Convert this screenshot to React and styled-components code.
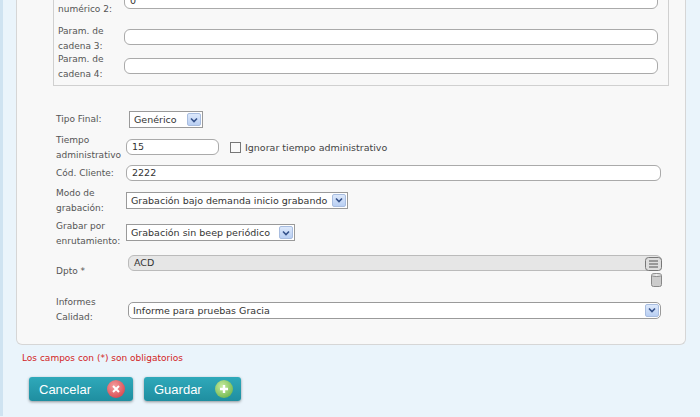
import React from "react";
import styled, { createGlobalStyle } from "styled-components";

const G = createGlobalStyle`
  html,body{margin:0;padding:0;background:#eaf4fb;font-family:"DejaVu Sans",Verdana,sans-serif;font-size:9px;color:#444;overflow:hidden;}
`;
const Page = styled.div`width:700px;height:417px;position:relative;border-left:3px solid #cfe3f1;box-sizing:border-box;`;
const Panel = styled.div`
  margin-left:13px;width:670px;height:346px;box-sizing:border-box;background:#f8f8f8;
  border:1px solid #d6d6d6;border-top:none;border-radius:0 0 6px 6px;position:relative;
`;
const Fieldset = styled.div`
  margin-left:36px;width:616px;height:87px;margin-top:-1px;box-sizing:border-box;
  border:1px solid #d0d0d0;border-top:none;display:flex;flex-direction:column;
`;
const Body = styled.div`padding-left:35px;padding-top:20px;`;
const Row = styled.div`
  display:flex;align-items:${p=>p.$al||"center"};height:${p=>p.$h}px;
  padding-left:${p=>p.$pl||4}px;box-sizing:border-box;white-space:nowrap;
`;
const Label = styled.div`width:${p=>p.$w||66}px;line-height:15px;color:#555;flex:none;${p=>p.$pt?`padding-top:${p.$pt}px;`:""}`;
const Input = styled.div`
  width:${p=>p.$w}px;height:16px;box-sizing:border-box;border:1px solid #aaa;border-radius:6px;
  background:${p=>p.$grey?"#e6e6e6":"#fff"};padding:0 5px;line-height:14px;font-size:9.5px;color:#333;
  margin-left:${p=>p.$ml||0}px;flex:none;position:relative;${p=>p.$grey?"border-color:#bbb;":""}
`;
const Select = styled.div`
  width:${p=>p.$w}px;height:17px;box-sizing:border-box;border:1px solid #9a9a9a;background:#fff;
  display:flex;align-items:center;justify-content:space-between;padding-left:4px;font-size:9.5px;color:#333;
  margin-left:${p=>p.$ml||0}px;flex:none;border-radius:${p=>p.$r||0}px;white-space:nowrap;overflow:hidden;
`;
const Arrow = styled.div`
  width:14px;height:13px;margin-right:1px;background:linear-gradient(#dce8fb,#b9cff3);border:1px solid #a8bde0;
  border-radius:2px;box-sizing:border-box;display:flex;align-items:center;justify-content:center;flex:none;
`;
const Check = styled.div`width:11px;height:11px;border:1px solid #777;background:#fafafa;margin-left:11px;margin-right:4px;box-sizing:border-box;`;
const Req = styled.div`color:#d21d1d;font-size:9px;margin:8px 0 0 19px;`;
const Buttons = styled.div`display:flex;gap:11px;margin:14px 0 0 26px;`;
const Btn = styled.div`
  width:${p=>p.$w}px;height:24px;background:linear-gradient(#2fa9ba,#1f8ea0);border-radius:3px;
  box-shadow:0 1px 3px rgba(0,0,0,.4);color:#fff;font-family:"Liberation Sans",Arial,sans-serif;font-size:13px;
  display:flex;align-items:center;justify-content:space-between;padding:0 8px 0 10px;box-sizing:border-box;
`;
const Circ = styled.div`
  width:18px;height:18px;border-radius:50%;background:radial-gradient(circle at 40% 35%,${p=>p.$c1},${p=>p.$c2});
  display:flex;align-items:center;justify-content:center;
`;
const Tools = styled.div`position:absolute;right:0;top:1px;display:flex;flex-direction:column;align-items:flex-end;gap:2px;margin-right:-1px;`;

const Chev = () => (<svg width="8" height="6" viewBox="0 0 8 6"><path d="M1 1.5l3 3 3-3" stroke="#34518a" strokeWidth="1.6" fill="none"/></svg>);

export default function App(){
  return (<Page><G/>
    <Panel>
      <Fieldset>
        <Row $h={26} $al="flex-start"><Label $pt={3}>numérico 2:</Label><Input $w={534} style={{marginTop:-6}}>0</Input></Row>
        <Row $h={28}><Label>Param. de<br/>cadena 3:</Label><Input $w={534} style={{marginTop:-5}} /></Row>
        <Row $h={28}><Label>Param. de<br/>cadena 4:</Label><Input $w={534} style={{marginTop:-2}} /></Row>
      </Fieldset>
      <Body>
        <Row $h={27}><Label $w={73}>Tipo Final:</Label><Select $w={74}>Genérico<Arrow><Chev/></Arrow></Select></Row>
        <Row $h={29}><Label $w={70}>Tiempo<br/>administrativo</Label><Input $w={93} style={{marginTop:-2}}>15</Input><Check/><span style={{fontSize:9.5}}>Ignorar tiempo administrativo</span></Row>
        <Row $h={22}><Label $w={70}>Cód. Cliente:</Label><Input $w={535}>2222</Input></Row>
        <Row $h={34}><Label $w={70}>Modo de<br/>grabación:</Label><Select $w={222} style={{marginTop:-2}}>Grabación bajo demanda inicio grabando<Arrow><Chev/></Arrow></Select></Row>
        <Row $h={31}><Label $w={70}>Grabar por<br/>enrutamiento:</Label><Select $w={169} style={{marginTop:-2}}>Grabación sin beep periódico<Arrow><Chev/></Arrow></Select></Row>
        <Row $h={44} $al="flex-start" style={{paddingTop:6}}><Label $w={72} $pt={9}>Dpto *</Label>
          <Input $w={534} $grey>ACD
            <Tools>
              <svg width="17" height="14" viewBox="0 0 17 14"><rect x="0.5" y="0.5" width="16" height="13" rx="3" fill="#ddd" stroke="#777"/><path d="M4 4h9M4 7h9M4 10h9" stroke="#555" strokeWidth="1.2"/></svg>
              <svg width="11" height="14" viewBox="0 0 11 14"><rect x="0.5" y="1" width="10" height="12.5" rx="2" fill="#ccc" stroke="#888"/><ellipse cx="5.5" cy="2" rx="5" ry="1.5" fill="#eee" stroke="#888"/></svg>
            </Tools>
          </Input></Row>
        <Row $h={34}><Label $w={72}>Informes<br/>Calidad:</Label><Select $w={533} $r={5}>Informe para pruebas Gracia<Arrow><Chev/></Arrow></Select></Row>
      </Body>
    </Panel>
    <Req>Los campos con (*) son obligatorios</Req>
    <Buttons>
      <Btn $w={104}>Cancelar<Circ $c1="#f5a0a0" $c2="#d0303a"><svg width="8" height="8" viewBox="0 0 8 8"><path d="M1 1l6 6M7 1l-6 6" stroke="#fff" strokeWidth="2"/></svg></Circ></Btn>
      <Btn $w={97}>Guardar<Circ $c1="#c8eca0" $c2="#5aaa3a"><svg width="10" height="10" viewBox="0 0 10 10"><path d="M5 1v8M1 5h8" stroke="#fff" strokeWidth="2.4"/></svg></Circ></Btn>
    </Buttons>
  </Page>);
}
